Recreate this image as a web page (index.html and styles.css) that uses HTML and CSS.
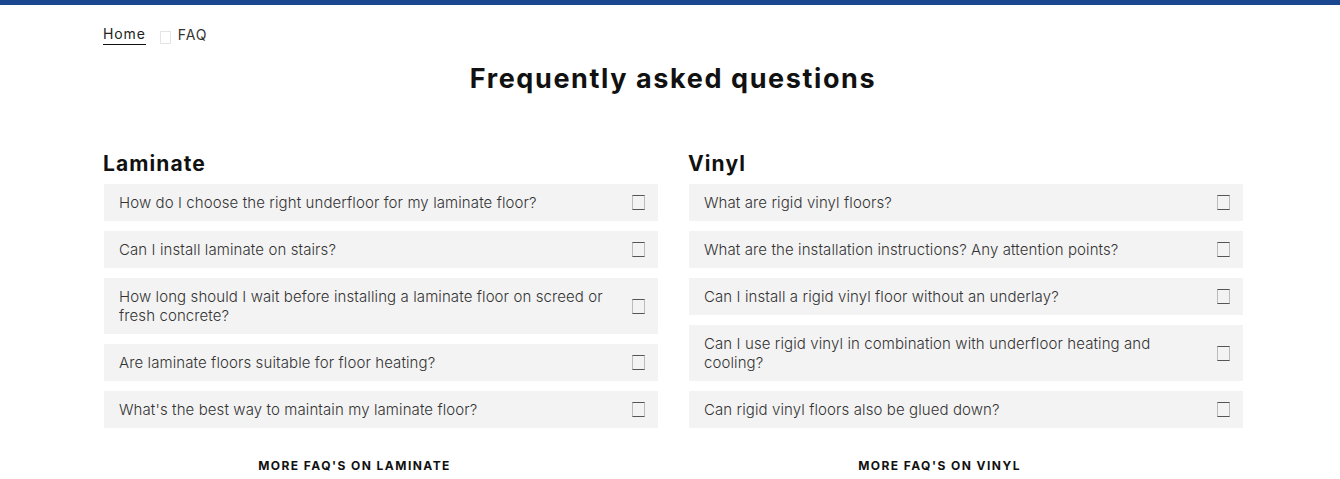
FILE: index.html
```html
<!DOCTYPE html>
<html lang="en">
<head>
<meta charset="utf-8">
<title>FAQ</title>
<link rel="stylesheet" href="styles.css">
</head>
<body>
<div class="topbar"></div>
<div class="container">
  <nav class="breadcrumb">
    <a class="crumb-link" href="#">Home</a>
    <span class="crumb-sep"></span>
    <span class="crumb-current">FAQ</span>
  </nav>
  <h1 class="page-title">Frequently asked questions</h1>
  <div class="columns">
    <section class="faq-col">
      <h2 class="col-title">Laminate</h2>
      <ul class="faq-list">
        <li class="faq-item"><span class="faq-q">How do I choose the right underfloor for my laminate floor?</span><span class="faq-icon"></span></li>
        <li class="faq-item"><span class="faq-q">Can I install laminate on stairs?</span><span class="faq-icon"></span></li>
        <li class="faq-item"><span class="faq-q">How long should I wait before installing a laminate floor on screed or fresh concrete?</span><span class="faq-icon"></span></li>
        <li class="faq-item"><span class="faq-q">Are laminate floors suitable for floor heating?</span><span class="faq-icon"></span></li>
        <li class="faq-item"><span class="faq-q">What's the best way to maintain my laminate floor?</span><span class="faq-icon"></span></li>
      </ul>
      <a class="more-link" href="#">MORE FAQ'S ON LAMINATE</a>
    </section>
    <section class="faq-col">
      <h2 class="col-title">Vinyl</h2>
      <ul class="faq-list">
        <li class="faq-item"><span class="faq-q">What are rigid vinyl floors?</span><span class="faq-icon"></span></li>
        <li class="faq-item"><span class="faq-q">What are the installation instructions? Any attention points?</span><span class="faq-icon"></span></li>
        <li class="faq-item"><span class="faq-q">Can I install a rigid vinyl floor without an underlay?</span><span class="faq-icon"></span></li>
        <li class="faq-item"><span class="faq-q">Can I use rigid vinyl in combination with underfloor heating and cooling?</span><span class="faq-icon"></span></li>
        <li class="faq-item"><span class="faq-q">Can rigid vinyl floors also be glued down?</span><span class="faq-icon"></span></li>
      </ul>
      <a class="more-link" href="#">MORE FAQ'S ON VINYL</a>
    </section>
  </div>
</div>
</body>
</html>
```
FILE: styles.css
```css
* { box-sizing: border-box; }
html, body { margin: 0; padding: 0; background: #fff; }
body {
  font-family: Inter, "Open Sans", sans-serif;
  color: #222;
  overflow: hidden;
}
.topbar { height: 5px; background: #1b4690; }
.container {
  width: 1140px;
  margin-left: 103px;
}
.breadcrumb {
  display: flex;
  align-items: center;
  height: 40px;
  padding-top: 20px;
  font-size: 14px;
  letter-spacing: 0.9px;
  color: #333;
}
.crumb-link {
  color: #222;
  text-decoration: none;
  border-bottom: 1px solid #111;
  line-height: 18px;
  padding-bottom: 1px;
}
.crumb-sep {
  width: 11px;
  height: 13px;
  border: 1px solid #e4e4e4;
  margin: 4px 7px 0 14px;
}
.crumb-current { line-height: 18px; }
.page-title {
  margin: 15px 0 0;
  text-align: center;
  font-size: 27px;
  font-weight: 700;
  letter-spacing: 1.6px;
  line-height: 38px;
  color: #111;
}
.columns {
  display: grid;
  grid-template-columns: 555px 555px;
  column-gap: 30px;
  margin-top: 52px;
}
.col-title {
  margin: 0 0 6px;
  font-size: 21px;
  font-weight: 700;
  letter-spacing: 1.1px;
  line-height: 28px;
  color: #111;
}
.faq-list {
  list-style: none;
  margin: 0;
  padding: 0;
  display: flex;
  flex-direction: column;
  gap: 10px;
}
.faq-item {
  display: flex;
  align-items: center;
  justify-content: space-between;
  background: #f3f3f3;
  padding: 9px 13px 9px 15px;
  line-height: 19px;
  font-size: 15px;
  font-weight: 300;
  letter-spacing: 0.1px;
  color: #333;
  margin-left: 1px;
}
.faq-q { padding-right: 18px; }
.faq-icon {
  flex: none;
  width: 13px;
  height: 15px;
  border-top: 1px solid #555;
  border-bottom: 1px solid #555;
  border-left: 1px solid #bbb;
  border-right: 1px solid #bbb;
}
.more-link {
  display: block;
  text-align: center;
  margin-top: 30px;
  padding-right: 52px;
  font-size: 12px;
  font-weight: 700;
  letter-spacing: 1.45px;
  color: #111;
  text-decoration: none;
}
```
